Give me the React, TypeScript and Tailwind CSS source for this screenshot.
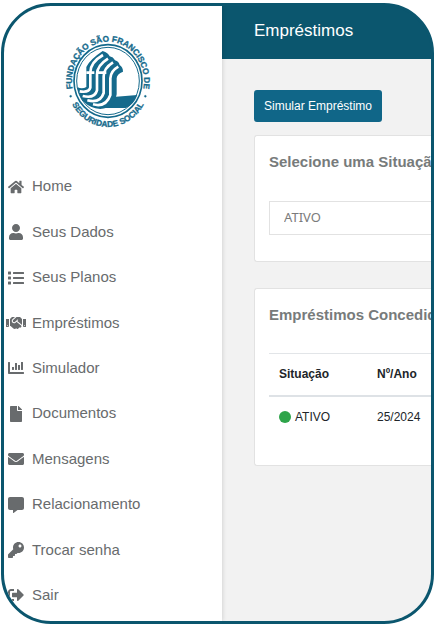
import type { ReactNode } from "react";
import {
  FaHome, FaUser, FaList, FaHandshake, FaChartBar,
  FaFile, FaEnvelope, FaCommentAlt, FaKey, FaSignOutAlt,
} from "react-icons/fa";

const items = [
  { label: "Home", Icon: FaHome, size: "h-4 w-4" },
  { label: "Seus Dados", Icon: FaUser, size: "h-4 w-4" },
  { label: "Seus Planos", Icon: FaList, size: "h-4 w-4" },
  { label: "Empréstimos", Icon: FaHandshake, size: "h-5 w-5" },
  { label: "Simulador", Icon: FaChartBar, size: "h-4 w-4" },
  { label: "Documentos", Icon: FaFile, size: "h-4 w-4" },
  { label: "Mensagens", Icon: FaEnvelope, size: "h-4 w-4" },
  { label: "Relacionamento", Icon: FaCommentAlt, size: "h-4 w-4" },
  { label: "Trocar senha", Icon: FaKey, size: "h-4 w-4" },
  { label: "Sair", Icon: FaSignOutAlt, size: "h-4 w-4" },
];

function Logo() {
  return (
    <svg viewBox="0 0 270 300" className="h-[100px] w-[90px]" role="img" aria-label="Fundação São Francisco de Seguridade Social">
      <defs>
        <path id="arc-top" d="M 30 178 A 108 118 0 1 1 240 178" />
        <path id="arc-bottom" d="M 10 150 A 125 138 0 0 0 260 150" />
      </defs>
      <g fill="#156a8c" stroke="#156a8c" fontSize="25" fontWeight="700">
        <text textAnchor="middle">
          <textPath href="#arc-top" startOffset="50%">FUNDAÇÃO SÃO FRANCISCO DE</textPath>
        </text>
        <text textAnchor="middle">
          <textPath href="#arc-bottom" startOffset="50%">SEGURIDADE SOCIAL</textPath>
        </text>
        <circle cx="23" cy="196" r="3" />
        <circle cx="247" cy="196" r="3" />
      </g>
      <ellipse cx="135" cy="150" rx="102" ry="109" fill="none" stroke="#156a8c" strokeWidth="5" />
      <ellipse cx="135" cy="150" rx="94" ry="101" fill="none" stroke="#156a8c" strokeWidth="3" />
      <path d="M150 198 L223 192 Q212 222 188 231 L108 231 Z" fill="#156a8c" />
      <path d="M70 108 Q80 86 119 60 Q136 66 140 76 Q151 78 156 88 Q168 92 170 102 Q180 108 180 122 Q162 128 161 142 V190 Q154 232 112 234 C70 232 47 202 43 168 Q56 176 70 168 Z" fill="#156a8c" />
      <g fill="none" stroke="#fff" strokeWidth="8">
        <path d="M120 72 Q82 94 82 124 V170 Q78 186 50 181" />
        <path d="M135 83 Q102 104 102 130 V178 Q95 204 59 195" />
        <path d="M150 94 Q122 112 122 136 V186 Q112 218 73 208" />
        <path d="M166 107 Q143 120 142 142 V192 Q129 230 90 220" />
      </g>
      <path d="M70 125 H94 M100 125 H130" stroke="#fff" strokeWidth="8" />
    </svg>
  );
}

function Card({ title, children, className }: { title: string; children: ReactNode; className: string }) {
  return (
    <section className={`overflow-hidden rounded-l-[3px] border border-r-0 border-[#e2e2e2] bg-white pl-3.5 ${className}`}>
      <h2 className="whitespace-nowrap pt-4 text-[15px] leading-5 font-bold text-[#777b7b]">{title}</h2>
      {children}
    </section>
  );
}

export default function App() {
  return (
    <div className="flex h-screen min-h-[560px] bg-white pt-[3px] pr-[2px] pb-[2px] pl-px font-['Liberation_Sans',Arial,sans-serif]">
      <div className="flex min-w-0 flex-1 overflow-hidden rounded-[50px] border-3 border-[#0b566e] bg-[#0b566e]">
        <aside className="z-10 flex w-[218px] shrink-0 flex-col bg-white pb-[3px] shadow-[1px_0_4px_rgba(0,0,0,0.12)]">
          <div className="flex h-[158px] justify-center pt-[25px] pr-2.5">
            <Logo />
          </div>
          <nav className="flex-1">
            <ul className="flex h-full flex-col">
              {items.map(({ label, Icon, size }) => (
                <li key={label} className="flex-1">
                  <a href="#" className="flex h-full items-center gap-2 pl-1 text-[15px] text-[#686b6d]">
                    <span className="flex w-4 shrink-0 justify-center"><Icon className={`shrink-0 ${size}`} /></span>
                    {label}
                  </a>
                </li>
              ))}
            </ul>
          </nav>
        </aside>
        <main className="flex min-w-0 flex-1 flex-col">
          <header className="flex h-[53px] shrink-0 items-center pb-1 pl-8">
            <h1 className="text-[17px] leading-6 text-white">Empréstimos</h1>
          </header>
          <div className="flex-1 bg-[#f2f2f2] pt-[31px] pl-8">
            <button type="button" className="h-8 rounded-[3px] bg-[#106688] px-2.5 text-xs text-white">Simular Empréstimo</button>
            <Card title="Selecione uma Situação" className="mt-[13px] h-[127px]">
              <select aria-label="Situação" defaultValue="ATIVO" className="mt-[29px] block h-[34px] w-[240px] appearance-none border border-[#e2e2e2] bg-white px-3.5 font-['Noto_Sans',sans-serif] text-[13px] text-[#7b7b7b]">
                <option>ATIVO</option>
              </select>
            </Card>
            <Card title="Empréstimos Concedidos" className="mt-[26px] h-[178px]">
              <table className="mt-7 w-full table-fixed border-t border-[#e2e5e8] text-left text-xs text-[#212529]">
                <thead>
                  <tr className="h-[42px] border-b-2 border-[#dee2e6]">
                    <th className="w-[98px] pl-2.5 font-bold">Situação</th>
                    <th className="pl-2.5 font-bold">Nº/Ano</th>
                  </tr>
                </thead>
                <tbody>
                  <tr className="h-[42px]">
                    <td className="pl-2.5">
                      <span className="flex items-center gap-1"><span className="h-3 w-3 rounded-full bg-[#2ea44a]" />ATIVO</span>
                    </td>
                    <td className="pl-2.5">25/2024</td>
                  </tr>
                </tbody>
              </table>
            </Card>
          </div>
        </main>
      </div>
    </div>
  );
}
